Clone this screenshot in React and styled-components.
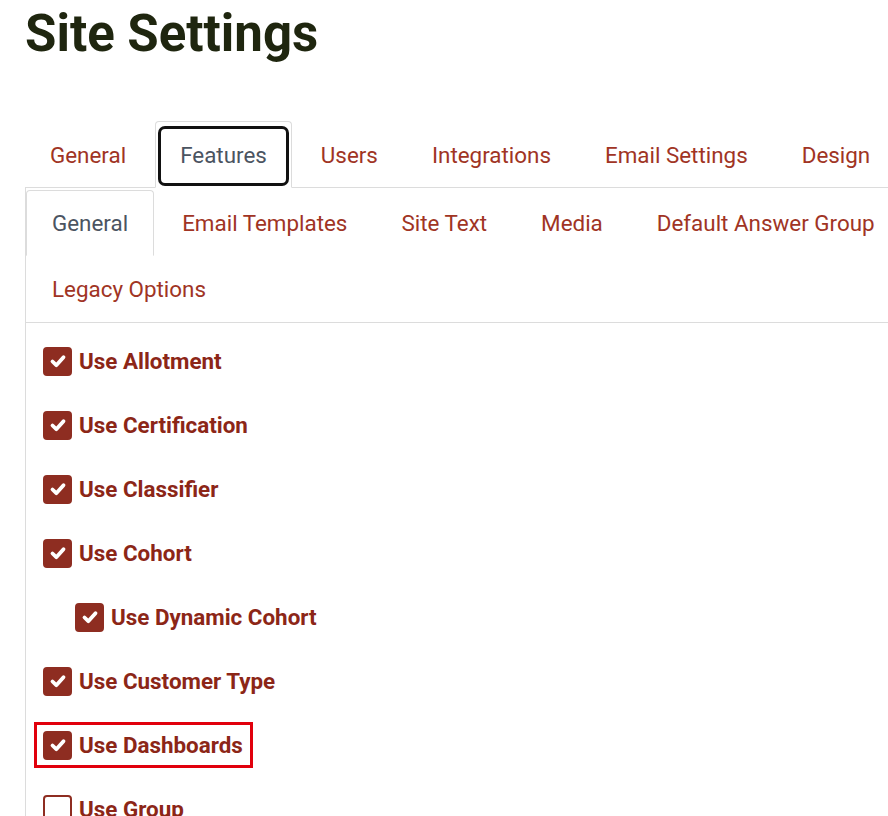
import React from "react";
import styled, { createGlobalStyle } from "styled-components";

const Global = createGlobalStyle`
  html, body { margin: 0; padding: 0; background: #fff; overflow: hidden; }
  body { font-family: Roboto, "Liberation Sans", Arial, sans-serif; }
  * { box-sizing: border-box; }
`;

const Page = styled.div`
  padding: 4px 0 0 25px;
  width: 940px;
`;

const Title = styled.h1`
  margin: 0 0 57px 0;
  font-size: 51px;
  line-height: 60px;
  font-weight: 700;
  color: #1f260f;
`;

const Content = styled.div`
  width: 900px;
`;

const NavTabs = styled.div`
  display: flex;
  flex-wrap: wrap;
  gap: 4px;
  border-bottom: 1px solid #dcdcdc;
`;

const Tab = styled.div`
  margin-bottom: -1px;
  border: 1px solid transparent;
  border-top-left-radius: 4px;
  border-top-right-radius: 4px;
  padding: 4px 2px 1px;
  ${(p) => p.$active && `border-color: #dcdcdc #dcdcdc #fff; background: #fff;`}
`;

const TabInner = styled.div`
  height: 60px;
  display: flex;
  align-items: center;
  padding: 0 19px 3px;
  border: 3px solid ${(p) => (p.$active ? "#111" : "transparent")};
  border-radius: 7px;
  font-size: 22.4px;
  color: ${(p) => (p.$active ? "#4b5461" : "#a03424")};
  white-space: nowrap;
`;

const Panel = styled.div`
  border-left: 1px solid #dcdcdc;
`;

const SubNav = styled.div`
  display: flex;
  flex-wrap: wrap;
  column-gap: 2px;
  border-bottom: 1px solid #dcdcdc;
  padding-top: 2px;
`;

const SubTab = styled.div`
  height: 66px;
  display: flex;
  align-items: center;
  padding: 0 25px 1px;
  border: 1px solid transparent;
  border-top-left-radius: 4px;
  border-top-right-radius: 4px;
  font-size: 22.4px;
  white-space: nowrap;
  color: ${(p) => (p.$active ? "#4b5461" : "#a03424")};
  ${(p) => p.$active && `border-color: #dcdcdc #dcdcdc transparent;`}
`;

const List = styled.div`
  padding: 6px 0 0 17px;
`;

const Item = styled.label`
  height: 64px;
  display: flex;
  align-items: center;
  gap: 7px;
  margin-left: ${(p) => (p.$indent ? "32px" : "0")};
`;

const Highlight = styled.span`
  display: inline-flex;
  align-items: center;
  gap: 7px;
  height: 46px;
  margin-left: -9px;
  padding: 0 7px 0 6px;
  border: 3px solid #e1000c;
`;

const Box = styled.span`
  width: 29px;
  height: 29px;
  flex: none;
  border-radius: 4px;
  display: flex;
  align-items: center;
  justify-content: center;
  background: ${(p) => (p.$checked ? "#8e2d21" : "#fff")};
  border: 2px solid #8e2d21;
`;

const LabelText = styled.span`
  font-size: 22.4px;
  font-weight: 700;
  color: #8c2617;
  white-space: nowrap;
`;

const Check = () => (
  <svg width="20" height="20" viewBox="0 0 20 20">
    <polyline
      points="4.5,10.5 8.3,14.2 15.5,6.2"
      fill="none"
      stroke="#fff"
      strokeWidth="3.8"
      strokeLinecap="round"
      strokeLinejoin="round"
    />
  </svg>
);

const topTabs = ["General", "Features", "Users", "Integrations", "Email Settings", "Design"];
const subTabs = ["General", "Email Templates", "Site Text", "Media", "Default Answer Group", "Legacy Options"];
const items = [
  { label: "Use Allotment", checked: true },
  { label: "Use Certification", checked: true },
  { label: "Use Classifier", checked: true },
  { label: "Use Cohort", checked: true },
  { label: "Use Dynamic Cohort", checked: true, indent: true },
  { label: "Use Customer Type", checked: true },
  { label: "Use Dashboards", checked: true, highlight: true },
  { label: "Use Group", checked: false },
];

const CheckRow = ({ item }) => {
  const inner = (
    <>
      <Box $checked={item.checked}>{item.checked && <Check />}</Box>
      <LabelText>{item.label}</LabelText>
    </>
  );
  return (
    <Item $indent={item.indent}>
      {item.highlight ? <Highlight>{inner}</Highlight> : inner}
    </Item>
  );
};

export default function App() {
  return (
    <>
      <Global />
      <Page>
        <Title>Site Settings</Title>
        <Content>
          <NavTabs>
            {topTabs.map((t) => (
              <Tab key={t} $active={t === "Features"}>
                <TabInner $active={t === "Features"}>{t}</TabInner>
              </Tab>
            ))}
          </NavTabs>
          <Panel>
            <SubNav>
              {subTabs.map((t, i) => (
                <SubTab key={t} $active={i === 0}>{t}</SubTab>
              ))}
            </SubNav>
            <List>
              {items.map((it) => (
                <CheckRow key={it.label} item={it} />
              ))}
            </List>
          </Panel>
        </Content>
      </Page>
    </>
  );
}
